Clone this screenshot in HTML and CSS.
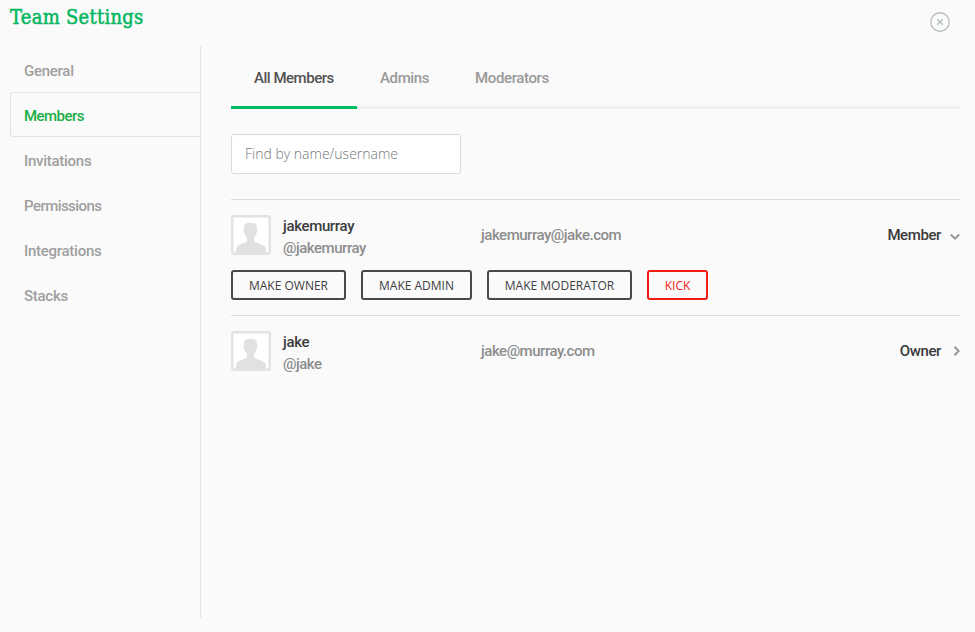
FILE: index.html
```html
<!DOCTYPE html>
<html lang="en">
<head>
<meta charset="utf-8">
<title>Team Settings</title>
<link rel="stylesheet" href="styles.css">
</head>
<body>
<svg class="defs" width="0" height="0" aria-hidden="true">
  <symbol id="avatar" viewBox="0 0 40 40">
    <rect x="1.25" y="1.25" width="37.5" height="37.5" rx="1.5" fill="#fff" stroke="#e3e3e3" stroke-width="2.5"/>
    <path d="M5 38v-3.500q0-3.500 4-5l5-2q2-.8 2-2v-2.500q-2-2-2.500-5-1-1-1-3 0-1 .6-1.500V12q0-4 4.400-4h4q4.400 0 4.400 4v1.500q.6.500.6 1.500 0 2-1 3-.5 3-2.500 5v2.500q0 1.200 2 2l5 2q5 1.500 5 5V38z" fill="#e1e1e1"/>
  </symbol>
</svg>
<header class="header">
  <h1 class="title">Team Settings</h1>
  <button class="close" aria-label="Close">
    <svg width="20" height="20" viewBox="0 0 20 20" fill="none" stroke="#b5bec2"><circle cx="10" cy="10" r="9.250" stroke-width="1.300"/><path d="M7.200 7.200l5.600 5.600M12.800 7.200l-5.600 5.600" stroke-width="1.400"/></svg>
  </button>
</header>
<div class="layout">
  <nav class="sidebar">
    <a class="nav general">General</a>
    <a class="nav active">Members</a>
    <a class="nav">Invitations</a>
    <a class="nav tight">Permissions</a>
    <a class="nav">Integrations</a>
    <a class="nav">Stacks</a>
  </nav>
  <main class="content">
    <div class="tabs">
      <a class="tab current">All Members</a>
      <a class="tab">Admins</a>
      <a class="tab">Moderators</a>
    </div>
    <input class="search" type="text" placeholder="Find by name/username">
    <section class="member">
      <div class="row">
        <svg class="avatar"><use href="#avatar"/></svg>
        <div class="names"><div class="name">jakemurray</div><div class="handle">@jakemurray</div></div>
        <div class="email">jakemurray@jake.com</div>
        <div class="role">Member</div>
        <svg class="chevron down" width="10" height="10" viewBox="0 0 10 10"><path d="M.8 2.500L5 6.700l4.200-4.200"/></svg>
      </div>
      <div class="actions">
        <button class="btn owner">MAKE OWNER</button>
        <button class="btn admin">MAKE ADMIN</button>
        <button class="btn moderator">MAKE MODERATOR</button>
        <button class="btn kick">KICK</button>
      </div>
    </section>
    <section class="member">
      <div class="row">
        <svg class="avatar"><use href="#avatar"/></svg>
        <div class="names"><div class="name">jake</div><div class="handle">@jake</div></div>
        <div class="email">jake@murray.com</div>
        <div class="role">Owner</div>
        <svg class="chevron" width="10" height="10" viewBox="0 0 10 10"><path d="M4.500.8L8.700 5 4.500 9.200"/></svg>
      </div>
    </section>
  </main>
</div>
</body>
</html>
```
FILE: styles.css
```css
* { box-sizing: border-box; }
body {
  margin: 0;
  height: 632px;
  overflow: hidden;
  background: #fafafa;
  color: #3b3b3d;
  font: 500 15px/22px Roboto, sans-serif;
}
.defs { position: absolute; }
.header {
  display: flex;
  justify-content: space-between;
  height: 46px;
  padding: 0 25px 0 10px;
}
.title {
  margin: 4px 0 0;
  color: #04b75e;
  font: 400 20px/26px "DejaVu Serif Condensed", "DejaVu Serif", serif;
  font-stretch: condensed;
  letter-spacing: .27px;
  -webkit-text-stroke: .5px #04b75e;
}
.close {
  width: 20px;
  height: 20px;
  margin-top: 12px;
  padding: 0;
  border: 0;
  background: none;
}
.close svg, .avatar { display: block; }
.layout { display: flex; padding-left: 10px; }
.sidebar {
  width: 191px;
  height: 572px;
  border-right: 1px solid #e4e4e4;
}
.nav {
  display: block;
  height: 45px;
  padding-left: 14px;
  color: #9f9f9f;
  line-height: 48px;
  letter-spacing: -.27px;
}
.general { height: 46px; line-height: 50px; }
.active {
  padding-left: 13px;
  border: 1px solid #e4e4e4;
  border-right: 0;
  border-radius: 3px 0 0 3px;
  color: #1aaf45;
  line-height: 46px;
  letter-spacing: -.55px;
}
.tight { letter-spacing: -.55px; }
.content { width: 729px; margin-left: 30px; }
.tabs {
  display: flex;
  height: 63px;
  box-shadow: inset 0 -3px #f0f0f0;
}
.tab { padding: 0 23px; color: #999; line-height: 64px; letter-spacing: -.38px; }
.current {
  width: 126px;
  border-bottom: 3px solid #00bd62;
  color: #525252;
  letter-spacing: -.48px;
  white-space: nowrap;
}
.search {
  display: block;
  width: 230px;
  height: 40px;
  margin: 25px 0;
  padding: 0 13px 2px;
  border: 1px solid #d9d9d9;
  border-radius: 3px;
  background: #fff;
  font: 300 14px "Open Sans", sans-serif;
}
.search::placeholder { color: #74777a; opacity: 1; }
.member { border-top: 1px solid #dcdcdc; padding: 15px 0; }
.row { display: flex; align-items: center; height: 40px; }
.avatar { width: 40px; height: 40px; }
.names { width: 198px; margin-left: 12px; padding-top: 4px; }
.name { letter-spacing: -.35px; }
.handle, .email { color: #8d8d8d; letter-spacing: -.48px; }
.role { margin-left: auto; letter-spacing: -.4px; }
.chevron { margin-left: 9px; fill: none; stroke: #969696; stroke-width: 2; }
.down { margin-top: 3px; }
.actions { display: flex; gap: 15px; margin-top: 15px; }
.btn {
  height: 30px;
  padding: 0;
  border: 2px solid #464a4e;
  border-radius: 3px;
  background: none;
  color: #3d4044;
  font: 400 12px "Open Sans", sans-serif;
}
.owner { width: 115px; }
.admin { width: 111px; }
.moderator { width: 145px; }
.kick { width: 61px; border-color: #f51c16; color: #f51c16; }
```
